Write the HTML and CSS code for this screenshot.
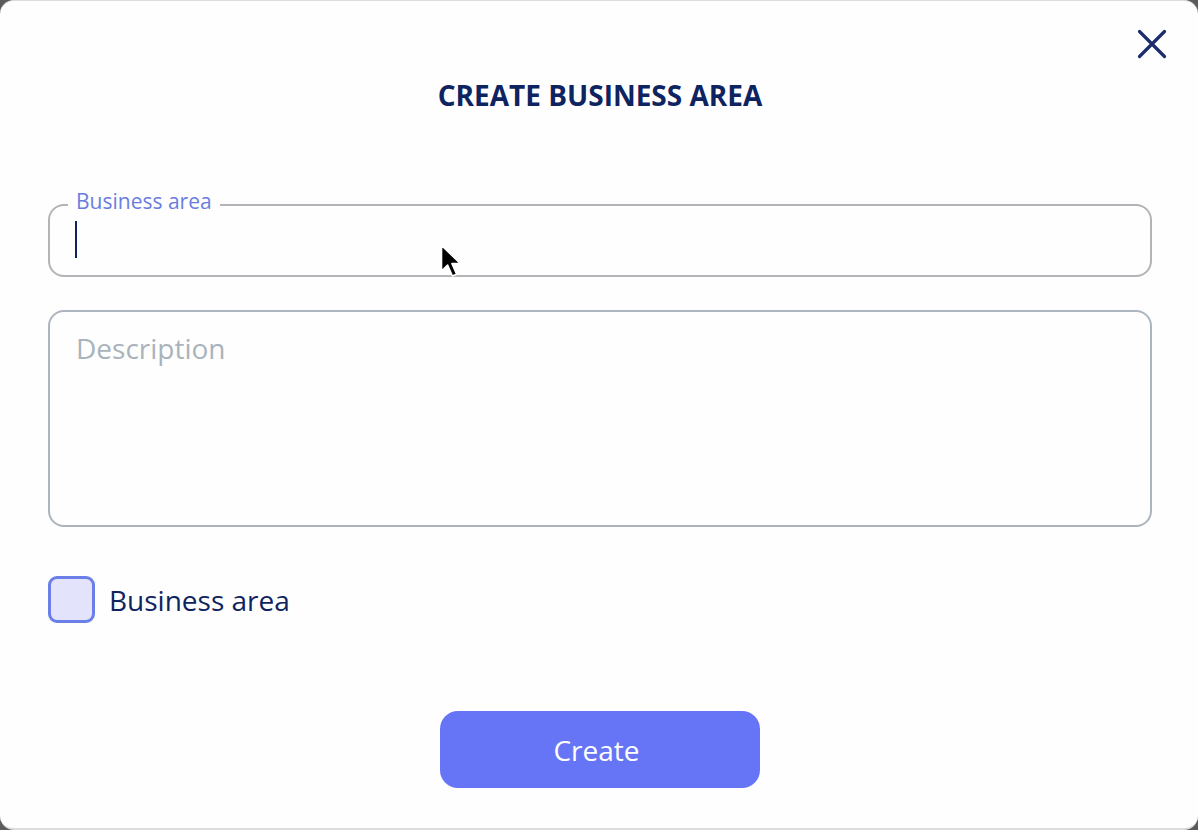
FILE: index.html
```html
<!DOCTYPE html>
<html>
<head>
<meta charset="utf-8">
<link rel="stylesheet" href="styles.css">
</head>
<body>
<div class="dialog">
  <button class="close" aria-label="Close">
    <svg width="32" height="32" viewBox="0 0 32 32"><path d="M3.5 3.5 L28.5 28.5 M28.5 3.5 L3.5 28.5" stroke="#1b2d6b" stroke-width="3.2" stroke-linecap="round" fill="none"/></svg>
  </button>
  <h1 class="title">CREATE BUSINESS AREA</h1>
  <div class="form">
    <div class="field">
      <fieldset class="outline"><legend>Business area</legend></fieldset>
      <span class="caret"></span>
      <svg class="pointer" width="26" height="38" viewBox="0 0 26 38"><path d="M2.5 2.5 L2.5 28 L8.6 22 L13.4 33 L17.6 31.2 L13 20.6 L21.5 20.6 Z" fill="#000" stroke="#fff" stroke-width="1.6" stroke-linejoin="round"/></svg>
    </div>
    <div class="textarea">Description</div>
    <label class="check">
      <span class="box"></span>
      <span class="check-label">Business area</span>
    </label>
  </div>
  <div class="actions">
    <button class="create">Create</button>
  </div>
</div>
</body>
</html>
```
FILE: styles.css
```css
* { box-sizing: border-box; }
html, body { margin: 0; padding: 0; }
body {
  background: #5b5b5b;
  width: 1198px;
  height: 830px;
  overflow: hidden;
  font-family: "Open Sans", "Noto Sans", sans-serif;
}
.dialog {
  position: relative;
  width: 1198px;
  height: 830px;
  background: #fefefe;
  border-radius: 14px;
  border-top: 1px solid #dcdcdc;
  border-bottom: 2px solid #dcdcdc;
  display: flex;
  flex-direction: column;
}
.close {
  position: absolute;
  top: 27px;
  right: 30px;
  width: 32px;
  height: 32px;
  padding: 0;
  border: none;
  background: none;
  cursor: pointer;
}
.close svg { display: block; }
.title {
  margin: 75px 0 0;
  text-align: center;
  font-size: 28px;
  font-weight: 700;
  color: #0e2461;
  line-height: 38px;
  padding-left: 2px;
}
.form {
  margin: 79px 46px 0 48px;
  display: flex;
  flex-direction: column;
}
.field {
  position: relative;
  height: 84px;
}
.outline {
  position: absolute;
  left: 0; right: 0; top: 0;
  height: 84px;
  margin: 0;
  padding: 0 18px;
  border: 2px solid #b2b4b8;
  border-radius: 16px;
}
.outline legend {
  padding: 0 8px 8px;
  font-size: 21px;
  line-height: 16px;
  color: #6a7ddf;
}
.caret {
  position: absolute;
  left: 27px;
  top: 28px;
  width: 2px;
  height: 37px;
  background: #0e2461;
}
.pointer {
  position: absolute;
  left: 391px;
  top: 50px;
}
.textarea {
  margin-top: 33px;
  height: 217px;
  border: 2px solid #acb5be;
  border-radius: 16px;
  padding: 17px 26px;
  font-size: 28px;
  line-height: 38px;
  color: #a9b3bc;
}
.check {
  margin-top: 49px;
  display: flex;
  align-items: center;
  gap: 14px;
}
.box {
  width: 47px;
  height: 47px;
  border: 3px solid #6a7fe8;
  background: #e3e3fb;
  border-radius: 9px;
}
.check-label {
  font-size: 28px;
  color: #0e2461;
  line-height: 38px;
}
.actions {
  margin-top: 88px;
  padding-left: 2px;
  display: flex;
  justify-content: center;
}
.create {
  width: 320px;
  height: 77px;
  border: none;
  border-radius: 18px;
  background: #6675f5;
  color: #ffffff;
  font-family: "Open Sans", "Noto Sans", sans-serif;
  font-size: 28px;
  padding: 0 7px 0 0;
  cursor: pointer;
}
```
